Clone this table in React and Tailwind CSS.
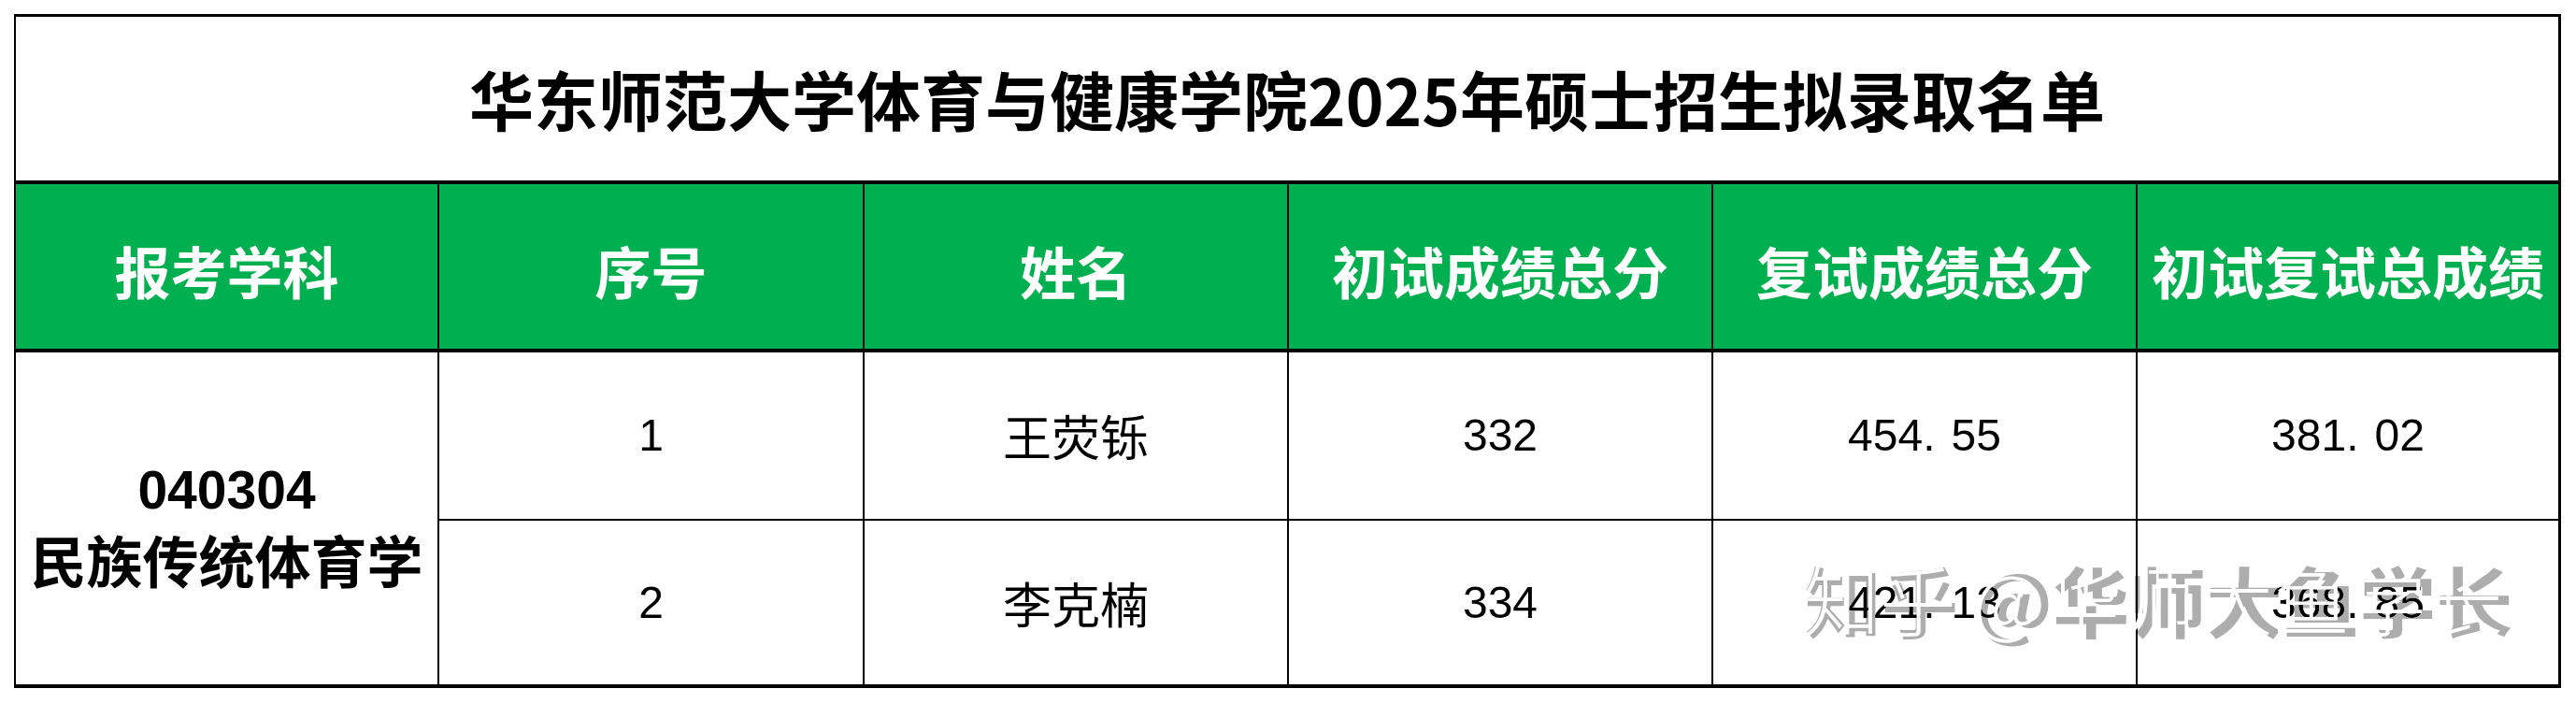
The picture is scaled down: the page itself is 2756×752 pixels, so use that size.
const headers = ["报考学科", "序号", "姓名", "初试成绩总分", "复试成绩总分", "初试复试总成绩"];

const rows = [
  { no: "1", name: "王荧铄", a: "332", b: ["454", "55"], c: ["381", "02"] },
  { no: "2", name: "李克楠", a: "334", b: ["421", "13"], c: ["368", "85"] },
];

function Dec({ v }) {
  return (
    <span>
      {v[0]}
      <span className="mr-[17px]">.</span>
      {v[1]}
    </span>
  );
}

export default function App() {
  return (
    <div className="w-[2756px] h-[752px] bg-white pt-[15px] pl-[15px]">
      <div className="relative w-[2725px] border-t-[3px] border-l-2 border-r-[3px] border-b-4 border-black">
        <div className="h-[179px] border-b-4 border-black flex items-center justify-center">
          <span className="font-['Noto_Sans_CJK_SC',sans-serif] font-bold text-[69px] leading-none text-black">
            华东师范大学体育与健康学院2025年硕士招生拟录取名单
          </span>
        </div>
        <div className="grid grid-cols-[453px_455px_454px_454px_454px_450px] h-[180px] border-b-4 border-black bg-[#00b050]">
          {headers.map((h, i) => (
            <div
              key={h}
              className={
                i < 5
                  ? "flex items-center justify-center pt-[8px] border-r-2 border-black"
                  : "flex items-center justify-center pt-[8px]"
              }
            >
              <span className="font-['Noto_Sans_CJK_SC',sans-serif] font-bold text-[60px] leading-none text-white whitespace-nowrap">
                {h}
              </span>
            </div>
          ))}
        </div>
        <div className="grid grid-cols-[453px_455px_454px_454px_454px_450px] grid-rows-[180px_175px]">
          <div className="row-span-2 border-r-2 border-black flex flex-col items-center justify-center pt-[12px]">
            <span className="font-['Liberation_Sans',sans-serif] font-bold text-[57px] leading-[74px] text-black">
              040304
            </span>
            <span className="font-['Noto_Sans_CJK_SC',sans-serif] font-bold text-[60px] leading-[74px] text-black whitespace-nowrap">
              民族传统体育学
            </span>
          </div>
          {rows.map((r, ri) => {
            const cells = [
              <span key="n" className="font-['Liberation_Sans',sans-serif] text-[48px] leading-none">{r.no}</span>,
              <span key="m" className="font-['Noto_Sans_CJK_SC',sans-serif] text-[52px] leading-none">{r.name}</span>,
              <span key="a" className="font-['Liberation_Sans',sans-serif] text-[48px] leading-none">{r.a}</span>,
              <span key="b" className="font-['Liberation_Sans',sans-serif] text-[48px] leading-none"><Dec v={r.b} /></span>,
              <span key="c" className="font-['Liberation_Sans',sans-serif] text-[48px] leading-none"><Dec v={r.c} /></span>,
            ];
            return cells.map((c, ci) => (
              <div
                key={ri + "-" + ci}
                className={
                  ri === 0
                    ? ci < 4
                      ? "flex items-center justify-center text-black border-b-2 border-r-2 border-black"
                      : "flex items-center justify-center text-black border-b-2 border-black"
                    : ci < 4
                    ? "flex items-center justify-center text-black border-r-2 border-black"
                    : "flex items-center justify-center text-black"
                }
              >
                {c}
              </div>
            ));
          })}
        </div>

        <div className="absolute left-[1914px] top-[582px] pointer-events-none">
          <div className="relative font-['Noto_Sans_CJK_SC',sans-serif] text-[82px] leading-none whitespace-nowrap">
            <span className="text-[#adadad] font-bold mix-blend-darken">知乎 @华师大鱼学长</span>
            <span className="absolute left-[-2px] top-[-2px] text-white font-light">知乎 @华师大鱼学长</span>
          </div>
        </div>
      </div>
    </div>
  );
}
